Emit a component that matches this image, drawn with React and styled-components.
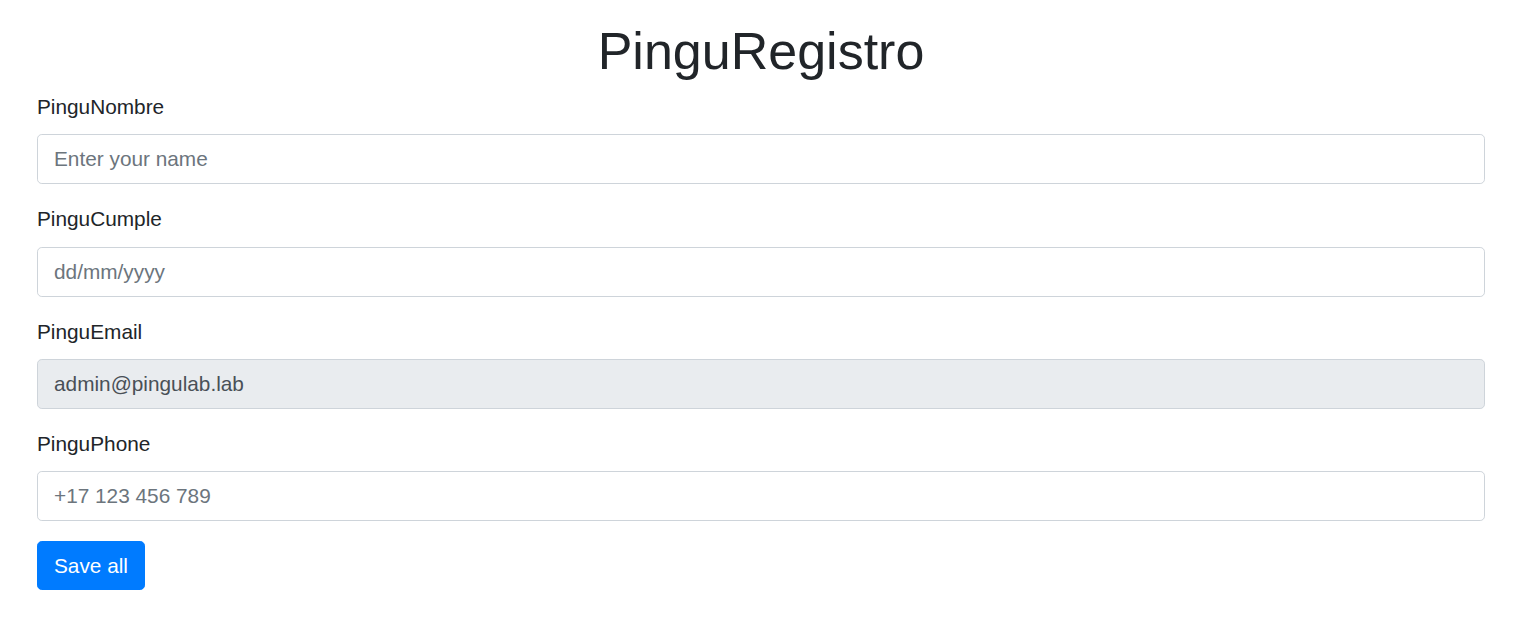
import React from 'react';
import styled, { createGlobalStyle } from 'styled-components';

const GlobalStyle = createGlobalStyle`
  body {
    margin: 0;
    font-family: "Liberation Sans", Arial, sans-serif;
    color: #212529;
    background: #fff;
  }
  * { box-sizing: border-box; }
`

const Page = styled.main`
  padding: 20px 33px 0 37px;
`

const Title = styled.h1`
  margin: 0 0 10px;
  font-size: 52px;
  font-weight: 400;
  line-height: 62px;
  text-align: center;
`

const Group = styled.div`
  margin-bottom: 20px;
`

const Label = styled.label`
  display: block;
  font-size: 20.8px;
  line-height: 30px;
  margin-bottom: 12.33px;
`

const Input = styled.input`
  display: block;
  width: 100%;
  height: 50px;
  padding: 0 16px;
  font-family: inherit;
  font-size: 20.8px;
  color: #495057;
  background: ${props => props.disabled ? '#e9ecef' : '#fff'};
  border: 1px solid #ced4da;
  border-radius: 4.8px;
  outline: none;
  &::placeholder { color: #6c757d; opacity: 1; }
`

const SaveButton = styled.button`
  height: 49px;
  padding: 0 16px;
  font-family: inherit;
  font-size: 20.8px;
  color: #fff;
  background: #007bff;
  border: 1px solid #007bff;
  border-radius: 4.8px;
  cursor: pointer;
`

const campos = [
  { id: 'nombre', label: 'PinguNombre', placeholder: 'Enter your name' },
  { id: 'cumple', label: 'PinguCumple', placeholder: 'dd/mm/yyyy' },
  { id: 'email', label: 'PinguEmail', value: 'admin@pingulab.lab', disabled: true },
  { id: 'phone', label: 'PinguPhone', placeholder: '+17 123 456 789' },
]

const App = () => {
  return (
    <>
      <GlobalStyle />
      <Page>
        <Title>PinguRegistro</Title>
        <form onSubmit={e => e.preventDefault()}>
          {campos.map(c => (
            <Group key={c.id}>
              <Label htmlFor={c.id}>{c.label}</Label>
              <Input
                id={c.id}
                placeholder={c.placeholder}
                defaultValue={c.value}
                disabled={c.disabled}
              />
            </Group>
          ))}
          <SaveButton type="submit">Save all</SaveButton>
        </form>
      </Page>
    </>
  )
}

export default App
